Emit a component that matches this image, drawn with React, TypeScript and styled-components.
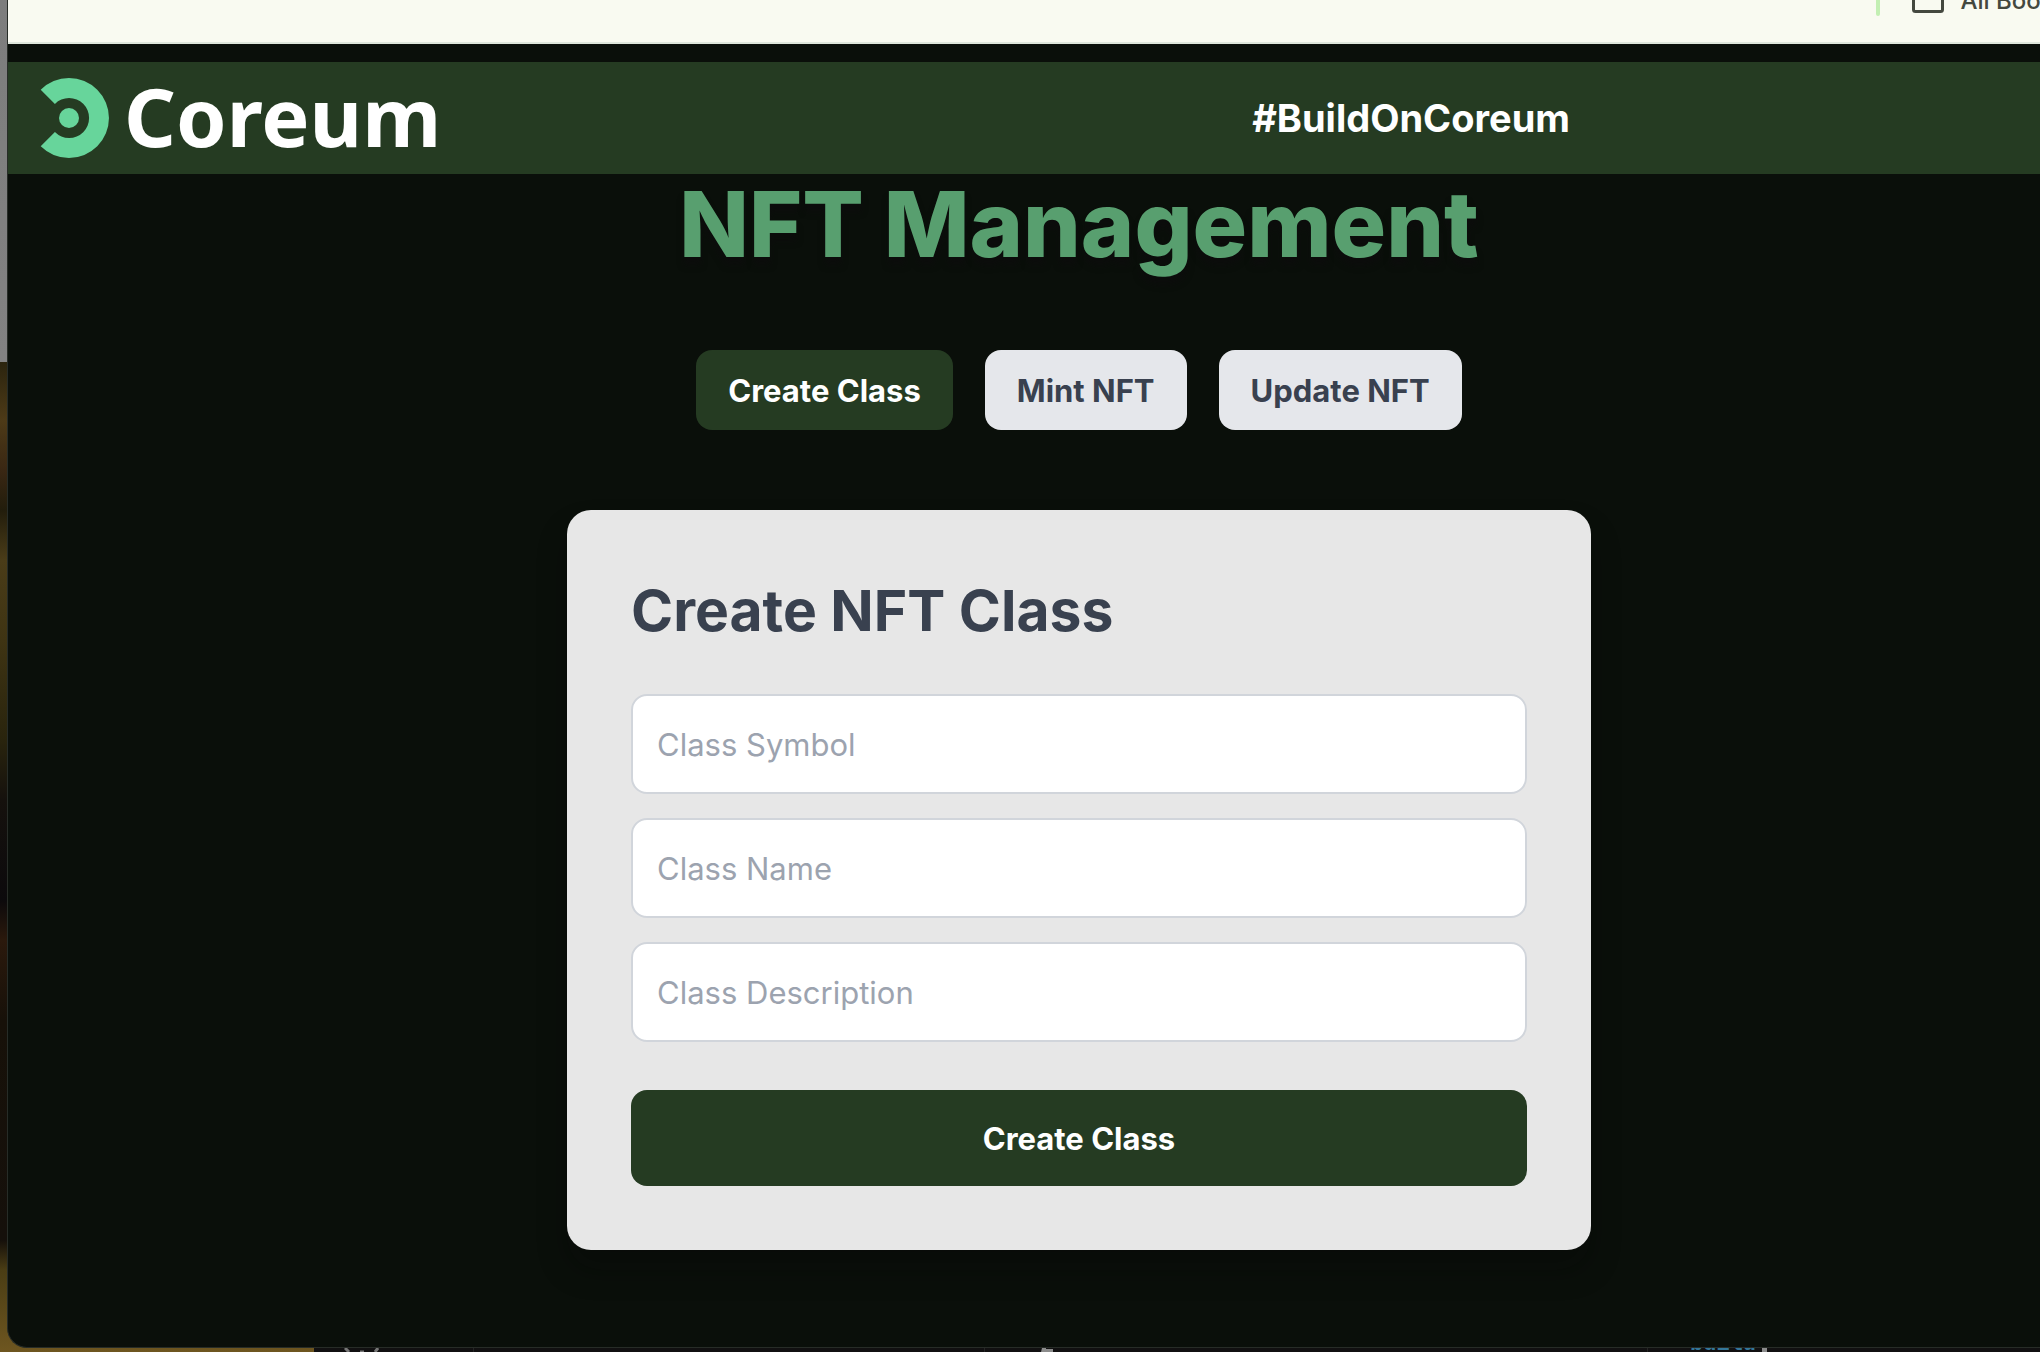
import React, { useState } from "react";
import styled, { createGlobalStyle } from "styled-components";

const GlobalStyle = createGlobalStyle`
  *, *::before, *::after { box-sizing: border-box; }
  body { margin: 0; font-family: Inter, "Liberation Sans", sans-serif; }
  h1, h2 { margin: 0; }
  button, input { font: inherit; }
`;

const Desktop = styled.div`
  display: grid;
  grid-template-rows: 1fr 4px;
  min-height: 100vh;
  padding-left: 7px;
  overflow: hidden;
  background: linear-gradient(
    180deg,
    #7d7d7d 0, #828282 362px,
    #2b240e 362px, #4d3a17 420px, #3a2713 470px, #221d0c 510px,
    #4a3c18 560px, #3f3413 640px, #29240d 740px, #15110d 800px,
    #0c0a0c 900px, #2b190c 940px, #171109 1020px, #15100b 1240px,
    #4a3d14 1270px, #6e5620 1352px
  );
`;

const BrowserWindow = styled.div`
  display: flex;
  flex-direction: column;
  margin-right: -110px;
  border-left: 1px solid #272c27;
  border-bottom: 1px solid #272c27;
  border-bottom-left-radius: 20px;
  overflow: hidden;
  background: #0a0f0a;
`;

const BookmarkBar = styled.div`
  display: flex;
  align-items: center;
  justify-content: flex-end;
  gap: 16px;
  height: 86px;
  margin-top: -42px;
  padding-right: 25px;
  border-bottom: 2px solid #dfe7dc;
  background: #f9faf1;
  color: #44483f;
  font-size: 24px;
  font-weight: 500;
`;

const BarDivider = styled.span`
  width: 4px;
  height: 32px;
  margin-right: 16px;
  border-radius: 2px;
  background: #c3efb3;
`;

const Page = styled.div`
  flex: 1;
  padding-top: 18px;
`;

const NavBar = styled.header`
  display: grid;
  grid-template-columns: 7fr 5fr;
  align-items: center;
  height: 112px;
  padding: 0 32px;
  background: #253b22;
  color: #fff;
`;

const Brand = styled.a`
  display: flex;
  align-items: center;
  gap: 14px;
  color: #fff;
  text-decoration: none;
`;

const Wordmark = styled.span`
  padding-bottom: 4px;
  font-family: "Noto Sans", "Open Sans", sans-serif;
  font-size: 81px;
  font-weight: 700;
  line-height: 108px;
`;

const Tagline = styled.span`
  font-size: 38px;
  font-weight: 700;
  line-height: 56px;
`;

const Main = styled.main`
  display: flex;
  flex-direction: column;
  align-items: center;
`;

const Title = styled.h1`
  margin-bottom: 76px;
  color: #589f6f;
  font-size: 91px;
  font-weight: 800;
  line-height: 100px;
  text-shadow: 0 8px 6px rgba(14, 12, 14, 0.6);
`;

const Tabs = styled.nav`
  display: flex;
  gap: 32px;
  margin-bottom: 80px;
`;

const Tab = styled.button<{ $active: boolean }>`
  padding: 17px 32px 15px;
  border: 0;
  border-radius: 16px;
  background: ${(p) => (p.$active ? "#253b22" : "#e5e7eb")};
  color: ${(p) => (p.$active ? "#fff" : "#39414f")};
  font-size: 31px;
  font-weight: 700;
  line-height: 48px;
  cursor: pointer;
`;

const Card = styled.form`
  display: flex;
  flex-direction: column;
  gap: 24px;
  width: 100%;
  max-width: 1024px;
  padding: 64px;
  border-radius: 24px;
  background: #e7e7e7;
  box-shadow: 0 20px 30px rgba(8, 8, 8, 0.3);
`;

const CardTitle = styled.h2`
  margin-bottom: 22px;
  color: #39414f;
  font-size: 57px;
  font-weight: 700;
  line-height: 74px;
`;

const Field = styled.input`
  width: 100%;
  padding: 24px;
  height: 100px;
  border: 2px solid #d1d5db;
  border-radius: 16px;
  background: #fff;
  color: #39414f;
  font-size: 31px;
  line-height: 48px;
  &::placeholder { color: #9ca3af; opacity: 1; }
`;

const Submit = styled.button`
  margin-top: 24px;
  padding: 25px 24px 23px;
  border: 0;
  border-radius: 16px;
  background: #253b22;
  color: #fff;
  font-size: 31px;
  font-weight: 700;
  line-height: 48px;
  cursor: pointer;
`;

const EditorStrip = styled.div`
  display: grid;
  grid-template-columns: 159px 511px 663px 1fr;
  height: 4px;
  margin-left: 307px;
  overflow: hidden;
  background: #111011;
`;

const EditorPane = styled.div`
  display: flex;
  align-items: flex-end;
  height: 4px;
  padding-left: 42px;
  border-left: 1px solid #242424;
  color: #34779a;
  font-family: "Liberation Mono", monospace;
  font-size: 22px;
  font-weight: 700;
  line-height: 14px;
`;

const Cursor = styled.span`
  width: 5px;
  height: 4px;
  margin-left: 6px;
  background: #8c8c8c;
`;

const PaneIcon = styled.svg`
  display: block;
  margin-left: 30px;
`;

const FileIcon = styled.svg`
  display: block;
  margin-left: 14px;
`;

const tabs = ["Create Class", "Mint NFT", "Update NFT"];
const fields = ["Class Symbol", "Class Name", "Class Description"];

function CoreumMark() {
  return (
    <svg width="70" height="80" viewBox="-29 -40 70 80" aria-hidden="true">
      <path
        fill="#67d59b"
        d="M-28.3-28.3A40 40 0 1 1-28.3 28.3L-14.1 14.1A20 20 0 1 0-14.1-14.1Z"
      />
      <circle r="10" fill="#67d59b" />
    </svg>
  );
}

function FolderIcon() {
  return (
    <svg width="32" height="26" viewBox="0 0 32 26" fill="none" stroke="#44483f" strokeWidth="3" aria-hidden="true">
      <path d="M1.5 3.5a2 2 0 0 1 2-2h8l3 3h14a2 2 0 0 1 2 2v16a2 2 0 0 1-2 2h-25a2 2 0 0 1-2-2Z" />
    </svg>
  );
}

export default function App() {
  const [active, setActive] = useState(tabs[0]);
  return (
    <Desktop>
      <GlobalStyle />
      <BrowserWindow>
        <BookmarkBar>
          <BarDivider />
          <FolderIcon />
          <span>All Bookmarks</span>
        </BookmarkBar>
        <Page>
          <NavBar>
            <Brand href="#">
              <CoreumMark />
              <Wordmark>Coreum</Wordmark>
            </Brand>
            <Tagline>#BuildOnCoreum</Tagline>
          </NavBar>
          <Main>
            <Title>NFT Management</Title>
            <Tabs>
              {tabs.map((name) => (
                <Tab key={name} type="button" $active={name === active} onClick={() => setActive(name)}>
                  {name}
                </Tab>
              ))}
            </Tabs>
            <Card onSubmit={(e) => e.preventDefault()}>
              <CardTitle>Create NFT Class</CardTitle>
              {fields.map((name) => (
                <Field key={name} placeholder={name} aria-label={name} />
              ))}
              <Submit type="submit">Create Class</Submit>
            </Card>
          </Main>
        </Page>
      </BrowserWindow>
      <EditorStrip>
        <PaneIcon width="35" height="4" viewBox="0 0 35 4" fill="none" stroke="#777" strokeWidth="3" aria-hidden="true">
          <path d="M1 0L5 4M34 0L31 4M16 4h4" />
        </PaneIcon>
        <EditorPane />
        <EditorPane>
          <FileIcon width="12" height="4" viewBox="0 0 12 4" fill="#8c8c8c" aria-hidden="true">
            <path d="M1 0h4v1h7v3H0Z" />
          </FileIcon>
        </EditorPane>
        <EditorPane>
          build
          <Cursor />
        </EditorPane>
      </EditorStrip>
    </Desktop>
  );
}
